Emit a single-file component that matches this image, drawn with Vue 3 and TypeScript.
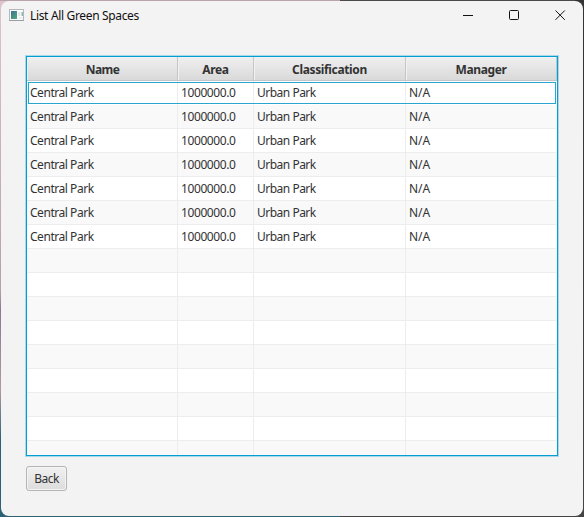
<script setup lang="ts">
interface GreenSpace {
  name: string
  area: string
  classification: string
  manager: string
}

const columns = ['Name', 'Area', 'Classification', 'Manager']

const spaces: GreenSpace[] = Array.from({ length: 7 }, () => ({
  name: 'Central Park',
  area: '1000000.0',
  classification: 'Urban Park',
  manager: 'N/A',
}))

const emptyRows = 9
</script>

<template>
  <div class="desktop">
    <main class="window">
      <header class="titlebar">
        <svg class="app-icon" width="15" height="12" viewBox="0 0 15 12">
          <defs>
            <linearGradient id="pane" x1="0" y1="0" x2="1" y2="1">
              <stop offset="0" stop-color="#3f6f9c" />
              <stop offset="1" stop-color="#4fae74" />
            </linearGradient>
          </defs>
          <rect x="0.5" y="0.5" width="14" height="11" fill="#fbfbfb" stroke="#b4b8bb" />
          <path d="M0 11.5H15" stroke="#999ea2" />
          <rect x="2" y="2" width="6" height="8" fill="url(#pane)" />
          <rect x="9" y="3" width="2.5" height="4" fill="#e3e8ed" />
          <rect x="12.5" y="3" width="1.5" height="4" fill="#8db8b5" />
          <rect x="9" y="8" width="5" height="2" fill="#edf0f2" />
        </svg>
        <h1 class="title"><span>List All Green Spaces</span></h1>
        <div class="controls">
          <svg width="11" height="11" viewBox="0 0 11 11"><path d="M0 5.5H10" stroke="#111" /></svg>
          <svg width="11" height="11" viewBox="0 0 11 11"><rect x="0.5" y="0.5" width="9" height="9" rx="1" fill="none" stroke="#111" /></svg>
          <svg width="11" height="11" viewBox="0 0 11 11"><path d="M0.5 0.5L9.8 9.8M9.8 0.5L0.5 9.8" stroke="#111" /></svg>
        </div>
      </header>
      <section class="content">
        <div class="table">
          <div class="row head">
            <div v-for="c in columns" :key="c" class="cell"><span>{{ c }}</span></div>
          </div>
          <div v-for="(s, i) in spaces" :key="i" class="row" :class="{ focused: i === 0 }">
            <div class="cell"><span class="name">{{ s.name }}</span></div>
            <div class="cell"><span class="area">{{ s.area }}</span></div>
            <div class="cell"><span class="kind">{{ s.classification }}</span></div>
            <div class="cell"><span class="manager">{{ s.manager }}</span></div>
          </div>
          <div v-for="n in emptyRows" :key="'empty' + n" class="row">
            <div v-for="c in columns" :key="c" class="cell"></div>
          </div>
        </div>
        <button class="back" type="button"><span>Back</span></button>
      </section>
    </main>
  </div>
</template>

<style>
body {
  overflow: hidden;
}
</style>

<style scoped>
.desktop {
  box-sizing: border-box;
  width: 584px;
  height: 517px;
  padding: 1px;
  background:
    linear-gradient(90deg, #2d6274 0 340px, #444 340px) 0 100% / 100% 9px no-repeat,
    linear-gradient(#333, #444) 100% 0 / 9px 100% no-repeat,
    linear-gradient(90deg, #b9a3ac 0 340px, #4a4a4a 340px) 0 0 / 100% 1px no-repeat,
    linear-gradient(#dcc3cc, #b8a0ab 290px, #8d7890 310px, #b298a2 390px, #2d6274 440px);
  font-family: 'Noto Sans', 'Open Sans', sans-serif;
  font-size: 12px;
  color: #333;
}
.window {
  height: 515px;
  border-radius: 8px;
  background: #f3f3f3;
  overflow: hidden;
}
.titlebar {
  display: flex;
  align-items: center;
  height: 29px;
  padding: 0 17px 0 8px;
}
.app-icon {
  flex: none;
  margin-bottom: 1px;
}
.title {
  margin: 0 0 0 6px;
  font-size: 12px;
  font-weight: 400;
  line-height: 16px;
  letter-spacing: -0.34px;
  color: #111;
  white-space: nowrap;
}
.controls {
  display: flex;
  gap: 35px;
  margin-left: auto;
}
.content {
  padding: 26px 25px 0;
}
.table {
  box-sizing: border-box;
  width: 532px;
  height: 400px;
  border: 1px solid #039ed3;
  box-shadow: 0 0 0 1px #a9d9e9;
  background: #fff;
  overflow: hidden;
}
.row {
  position: relative;
  display: grid;
  grid-template-columns: 151px 76px 152px 151px;
  grid-template-rows: 24px;
  height: 24px;
  background: #fff;
}
.row:nth-child(odd) {
  background: #f9f9f9;
}
.cell {
  box-sizing: border-box;
  padding-left: 3px;
  border-right: 1px solid #ededed;
  border-bottom: 1px solid #ededed;
  line-height: 24px;
  white-space: nowrap;
}
.cell:last-child {
  border-right-color: transparent;
}
.row.focused .cell {
  border-bottom-color: #fff;
}
.row.focused::after {
  content: '';
  position: absolute;
  inset: 1px;
  border: 1px solid #2aa5d0;
}
.head .cell {
  padding: 0;
  border-right-color: #c5c5c5;
  border-bottom-color: #c5c5c5;
  background: linear-gradient(#f0f0f0, #d9d9d9);
  box-shadow: inset 1px 1px 0 #f2f2f2;
  line-height: 25px;
  font-weight: 700;
  letter-spacing: -0.36px;
  text-align: center;
}
.head .cell:first-child {
  letter-spacing: -0.6px;
  padding-left: 1px;
}
.name {
  letter-spacing: -0.46px;
}
.area {
  letter-spacing: -0.4px;
}
.kind {
  letter-spacing: -0.5px;
}
.back {
  box-sizing: border-box;
  display: block;
  width: 41px;
  height: 25px;
  margin-top: 10px;
  padding: 0;
  border: 1px solid #b5b5b5;
  border-radius: 3px;
  background: linear-gradient(#f1f1f1, #dcdcdc);
  box-shadow: inset 0 0 0 1px #f4f4f4;
  color: #333;
  font: inherit;
  letter-spacing: -0.5px;
  line-height: 23px;
}
</style>
